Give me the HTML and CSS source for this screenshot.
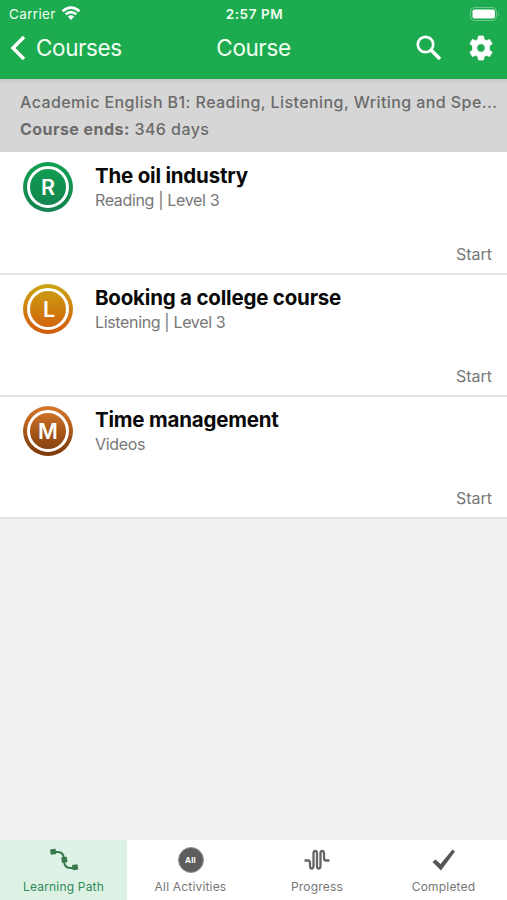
FILE: index.html
```html
<!DOCTYPE html>
<html lang="en">
<head>
	<meta charset="UTF-8">
	<title>Course</title>
	<link rel="stylesheet" href="styles.css">
</head>
<body>
	<div class="phone">
		<header class="header">
			<div class="status">
				<div class="carrier">
					<span>Carrier</span>
					<svg width="20" height="15" viewBox="0 0 20 15" fill="none" stroke="#fff" stroke-width="2.6">
						<path d="M1.500 5.200Q10-2 18.500 5.200"/>
						<path d="M4.600 8.300Q10 3.800 15.400 8.300"/>
						<path d="M10 14L6.800 10.600Q10 8 13.200 10.600Z" fill="#fff" stroke="none"/>
					</svg>
				</div>
				<div class="time">2:57 PM</div>
				<div class="battery">
					<svg width="30" height="14" viewBox="0 0 30 14">
						<rect x=".5" y=".5" width="26" height="13" rx="4" fill="none" stroke="#6ccb8c"/>
						<rect x="2.500" y="2.500" width="22.500" height="9" rx="2" fill="#fff"/>
						<path d="M28 5Q30 7 28 9Z" fill="#6ccb8c"/>
					</svg>
				</div>
			</div>
			<div class="nav">
				<a class="back">
					<svg width="16" height="26" viewBox="0 0 16 26" fill="none" stroke="#fff" stroke-width="3.500">
						<path d="M14 2L3 13L14 24"/>
					</svg>
					<span>Courses</span>
				</a>
				<h1>Course</h1>
				<div class="tools">
					<svg width="26" height="26" viewBox="0 0 26 26" fill="none" stroke="#fff">
						<circle cx="9.500" cy="9.500" r="7.700" stroke-width="2.700"/>
						<path d="M15 15L24 24" stroke-width="3.600"/>
					</svg>
					<svg width="26" height="26" viewBox="0 0 26 26">
						<path fill="#fff" stroke="#fff" stroke-width=".8" stroke-linejoin="round" fill-rule="evenodd" d="M10.500 1h5l.6 3.400 2.200 1.300 3.300-1.200 2.500 4.200-2.700 2.200v4.200l2.700 2.200-2.500 4.200-3.300-1.200-2.200 1.300-.6 3.400h-5l-.6-3.400-2.200-1.300-3.300 1.200-2.500-4.200 2.700-2.200v-4.200L1.900 8.700l2.500-4.200 3.300 1.200 2.200-1.300zM13 8.800a4.200 4.200 0 1 0 0 8.400a4.200 4.200 0 1 0 0-8.400z"/>
					</svg>
				</div>
			</div>
		</header>
		<div class="info">
			<p class="name">Academic English B1: Reading, Listening, Writing and Spe...</p>
			<p class="ends"><b>Course ends:</b> 346 days</p>
		</div>
		<ul class="list">
			<li>
				<div class="badge reading"><span>R</span></div>
				<div class="text">
					<h2>The oil industry</h2>
					<p>Reading | Level 3</p>
				</div>
				<a class="start">Start</a>
			</li>
			<li>
				<div class="badge listening"><span>L</span></div>
				<div class="text">
					<h2>Booking a college course</h2>
					<p>Listening | Level 3</p>
				</div>
				<a class="start">Start</a>
			</li>
			<li>
				<div class="badge videos"><span>M</span></div>
				<div class="text">
					<h2>Time management</h2>
					<p>Videos</p>
				</div>
				<a class="start">Start</a>
			</li>
		</ul>
		<nav class="tabs">
			<a class="current">
				<svg width="30" height="26" viewBox="0 0 30 26" fill="#38784b">
					<path d="M4 5H9Q15 5 15 13Q15 21 21 21H26" fill="none" stroke="#38784b" stroke-width="2"/>
					<path d="M1 2.500l5.500-.8l.8 5.200l-5.500.9zM12.200 10.500l5.500-.8l.8 5.400l-5.500.8zM23 18l5.500-.8l.8 5.200l-5.500.8z"/>
				</svg>
				<span>Learning Path</span>
			</a>
			<a>
				<i class="all">All</i>
				<span>All Activities</span>
			</a>
			<a>
				<svg width="26" height="26" viewBox="0 0 26 26" fill="none" stroke="#666" stroke-width="2.300">
					<path d="M.5 13.500H4Q6 13.500 6 16V19Q6 21.500 7.700 21.500T9.500 19V6.500Q9.500 4 11.300 4T13 6.500V19Q13 21.500 14.700 21.500T16.500 19V6.500Q16.500 4 18.200 4T20 6.500V11Q20 13.500 22 13.500H25.500"/>
				</svg>
				<span>Progress</span>
			</a>
			<a>
				<svg width="26" height="26" viewBox="0 0 26 26" fill="#555">
					<path d="M1.500 15L4.500 12.500L9.500 17L21.500 2.500L24 4.500L10 23.500Z"/>
				</svg>
				<span>Completed</span>
			</a>
		</nav>
	</div>
</body>
</html>
```
FILE: styles.css
```css
*{
	padding:0;
	margin:0;
	box-sizing: border-box;
}
body{
	font-family: Inter, "Liberation Sans", sans-serif;
	background:#f0f0f0;
}
svg{
	display: block;
}
.phone{
	width:507px;
	height:900px;
	display: flex;
	flex-direction: column;
	overflow: hidden;
}
.header{
	height:79px;
	flex:none;
	background:#1dab50;
	color:#f0fff2;
}
.status{
	height:27px;
	padding:0 7px 0 9px;
	display: grid;
	grid-template-columns: 1fr auto 1fr;
	align-items: center;
	font-size: 13.5px;
}
.carrier{
	display: flex;
	align-items: center;
	gap:5px;
}
.carrier span{
	letter-spacing: .35px;
}
.time{
	font-size: 13.5px;
	font-weight: 600;
	letter-spacing: .6px;
}
.battery{
	justify-self: end;
}
.nav{
	height:42px;
	padding:0 13px 0 10px;
	display: grid;
	grid-template-columns: 1fr auto 1fr;
	align-items: center;
}
.back{
	display: flex;
	align-items: center;
	gap:10px;
	font-size: 22.5px;
	letter-spacing: -.4px;
}
.back span{
	padding-bottom:2px;
}
.nav h1{
	padding:0 0 2px 3px;
	font-size: 22.5px;
	font-weight: 400;
	letter-spacing: -.4px;
}
.tools{
	display: flex;
	justify-content: flex-end;
	gap:26px;
}
.info{
	height:73px;
	flex:none;
	padding:10px 0 0 20px;
	background:linear-gradient(#c9c9c9, #d6d6d6 5px);
	color:#6b6b6b;
	font-size: 16px;
	font-weight: 500;
	line-height: 27px;
}
.name{
	letter-spacing: .42px;
	white-space: nowrap;
}
.ends{
	letter-spacing: .45px;
}
.list{
	list-style: none;
	padding-top:1px;
	background:#fff;
}
.list li{
	height:122px;
	padding:9px 15px 0 23px;
	display: grid;
	grid-template-columns: 50px 1fr auto;
	column-gap: 22px;
	border-bottom:2px solid #e4e4e4;
}
.badge{
	width:50px;
	height:50px;
	padding:4px;
	border-radius: 50%;
}
.badge span{
	display: flex;
	align-items: center;
	justify-content: center;
	height:42px;
	border:3px solid #fff;
	border-radius: 50%;
	color:#fff;
	font-size: 21.5px;
	font-weight: 600;
}
.reading{
	background:linear-gradient(#10a052, #13824f);
}
.listening{
	background:linear-gradient(#cba512, #d35b0c);
}
.listening span{
	padding-left:2px;
}
.videos{
	background:linear-gradient(#d9792c, #793808);
}
.text h2{
	padding-top:1px;
	font-size: 20.5px;
	line-height: 26px;
	font-weight: 700;
	letter-spacing: -.2px;
	color:#090909;
}
.text p{
	font-size: 16px;
	line-height: 22px;
	letter-spacing: -.35px;
	color:#777;
}
.start{
	align-self: end;
	padding-bottom:7px;
	font-size: 16px;
	line-height: 24px;
	color:#777;
}
.tabs{
	height:60px;
	margin-top:auto;
	display: grid;
	grid-template-columns: 127px 127px 126px 127px;
	background:#fff;
}
.tabs a{
	display: flex;
	flex-direction: column;
	align-items: center;
	padding-top:7px;
	font-size: 12px;
	letter-spacing: .18px;
	color:#777;
}
.tabs span{
	margin-top:6px;
	line-height: 16px;
}
.tabs .current{
	background:#ddf1e4;
	color:#308b59;
}
.all{
	width:26px;
	height:26px;
	border:1px solid #999;
	border-radius: 50%;
	background:#5d5d5d;
	color:#fff;
	font-size: 8px;
	font-style: normal;
	font-weight: 700;
	line-height: 24px;
	text-align: center;
}
```
